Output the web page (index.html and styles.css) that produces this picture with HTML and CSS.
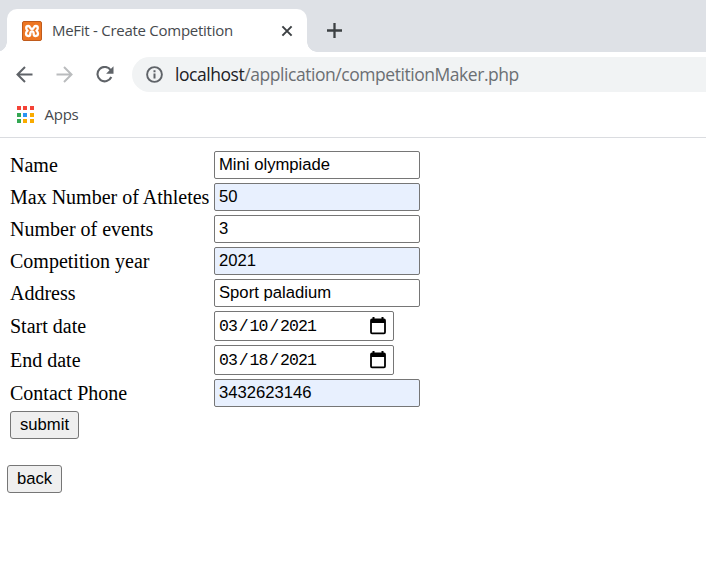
FILE: index.html
```html
<!DOCTYPE html>
<html lang="en">
<head>
<meta charset="utf-8">
<title>MeFit - Create Competition</title>
<link rel="stylesheet" href="styles.css">
</head>
<body>
<header class="browser">
  <div class="tabstrip">
    <div class="tab">
      <svg class="favicon" width="20" height="20" viewBox="0 0 20 20"><rect x=".5" y=".5" width="19" height="19" rx="1.500" fill="#ed7623" stroke="#c05b1c"/><g fill="none" stroke="#fff" stroke-width="2.300" stroke-linecap="round" stroke-linejoin="round"><path d="M8 6.300Q7.600 5 6.200 5Q4.200 5 4.200 7Q4.200 8.600 5.600 9.600Q4 10.800 4 12.600Q4 15 6.300 15Q8.300 15 8.300 12.900Q8.300 10.300 10 10.300T11.700 12.900Q11.700 15 13.700 15Q16 15 16 12.600Q16 10.800 14.400 9.600Q15.800 8.600 15.800 7Q15.800 5 13.800 5Q12.400 5 12 6.300Q11.600 8 10 8T8 6.300"/></g></svg>
      <span class="tab-title">MeFit - Create Competition</span>
      <svg class="close" width="12" height="12" viewBox="0 0 12 12"><path d="M1.400 1.400l9.200 9.200M10.600 1.400l-9.200 9.200" stroke="#3c4043" stroke-width="2"/></svg>
    </div>
    <svg class="new-tab" width="16" height="16" viewBox="0 0 16 16"><path d="M7.500 0v15M0 7.500h15" stroke="#3c4043" stroke-width="2.300"/></svg>
  </div>
  <div class="toolbar">
    <svg class="nav" width="18" height="18" viewBox="0 0 18 18"><path d="M16.500 8.500H2M9 1L1.500 8.500 9 16" fill="none" stroke="#5f6368" stroke-width="2"/></svg>
    <svg class="nav" width="18" height="18" viewBox="0 0 18 18"><path d="M.5 8.500H15M8 1l7.500 7.500L8 16" fill="none" stroke="#babcbe" stroke-width="2"/></svg>
    <svg class="nav" width="18" height="18" viewBox="0 0 18 18"><path d="M14.700 4.100A7.200 7.200 0 1 0 15.300 11" fill="none" stroke="#5f6368" stroke-width="2.100"/><path d="M17.500.3v7.400h-7.400z" fill="#5f6368"/></svg>
    <div class="address">
      <svg width="18" height="18" viewBox="0 0 18 18"><circle cx="8.500" cy="8.500" r="7.400" fill="none" stroke="#5f6368" stroke-width="1.900"/><path d="M8.500 7.500v5M8.500 4.200v2" stroke="#5f6368" stroke-width="2"/></svg>
      <span class="url"><span class="host">localhost</span>/application/competitionMaker.php</span>
    </div>
  </div>
  <div class="bookmarks">
    <div class="apps"><i class="r"></i><i class="r"></i><i class="r"></i><i class="g"></i><i class="b"></i><i class="y"></i><i class="g"></i><i class="y"></i><i class="y"></i></div>
    <span class="apps-label">Apps</span>
  </div>
</header>
<main>
  <form class="form">
    <label for="name">Name</label><input id="name" type="text" value="Mini olympiade">
    <label for="max">Max Number of Athletes</label><input id="max" class="filled" type="text" value="50">
    <label for="events">Number of events</label><input id="events" type="text" value="3">
    <label for="year">Competition year</label><input id="year" class="filled" type="text" value="2021">
    <label for="addr">Address</label><input id="addr" type="text" value="Sport paladium">
    <label>Start date</label>
    <div class="date"><span>03<b>/</b>10<b>/</b>2021</span><svg width="16" height="18" viewBox="0 0 16 18"><path d="M3.500 0v3M12.500 0v3" stroke="#000" stroke-width="2"/><rect x="1" y="2.500" width="14" height="13.800" rx="1" fill="none" stroke="#000" stroke-width="1.800"/><path d="M1 2h14v4H1z"/></svg></div>
    <label>End date</label>
    <div class="date"><span>03<b>/</b>18<b>/</b>2021</span><svg width="16" height="18" viewBox="0 0 16 18"><path d="M3.500 0v3M12.500 0v3" stroke="#000" stroke-width="2"/><rect x="1" y="2.500" width="14" height="13.800" rx="1" fill="none" stroke="#000" stroke-width="1.800"/><path d="M1 2h14v4H1z"/></svg></div>
    <label for="phone">Contact Phone</label><input id="phone" class="filled" type="text" value="3432623146">
    <button class="submit" type="button">submit</button>
  </form>
  <button class="back" type="button">back</button>
</main>
</body>
</html>
```
FILE: styles.css
```css
* { box-sizing: border-box; }
body { margin: 0; background: #fff; color: #000; overflow: hidden; }
svg { display: block; flex: none; }

.browser { height: 138px; border-bottom: 1px solid #dadce0; font-family: "Open Sans", sans-serif; }
.tabstrip { display: flex; height: 52px; padding: 9px 0 0 7px; background: #dee1e6; }
.tab { position: relative; display: flex; align-items: center; width: 300px; height: 43px; padding: 0 14px 0 15px; background: #fff; border-radius: 10px 10px 0 0; }
.tab::before, .tab::after { content: ""; position: absolute; bottom: 0; width: 10px; height: 10px; }
.tab::before { left: -10px; background: radial-gradient(circle at 0 0, transparent 9.5px, #fff 10px); }
.tab::after { right: -10px; background: radial-gradient(circle at 100% 0, transparent 9.5px, #fff 10px); }
.tab-title { margin-left: 10px; padding-bottom: 2px; font-size: 15px; letter-spacing: -0.27px; color: #45494d; white-space: nowrap; }
.close { margin-left: auto; }
.new-tab { margin: 14px 0 0 20px; }

.toolbar { display: flex; align-items: center; height: 45px; padding: 0 0 0 16px; }
.nav { margin-right: 22px; }
.address { display: flex; align-items: center; flex: 1; height: 35px; margin-left: -4px; padding-left: 14px; background: #f1f3f4; border-radius: 18px 0 0 18px; }
.url { margin-left: 11px; padding-bottom: 1px; font-size: 17.500px; letter-spacing: -0.45px; color: #6b6f73; white-space: nowrap; }
.host { color: #202124; }

.bookmarks { display: flex; align-items: center; height: 35px; padding-left: 17px; }
.apps { display: grid; grid-template-columns: repeat(3, 4px); gap: 2.300px; }
.apps i { width: 4px; height: 4px; }
.r { background: #f44336; }
.g { background: #34a853; }
.b { background: #2994f4; }
.y { background: #f9ab00; }
.apps-label { margin-left: 11px; padding-bottom: 1px; font-size: 15px; letter-spacing: -0.3px; color: #45494d; }

main { padding: 13px 7px; }
.form { display: grid; grid-template-columns: 200px 206px; column-gap: 4px; row-gap: 4px; align-items: center; margin-left: 3px; }
label { font: 20px/28px "Liberation Serif", serif; white-space: nowrap; }
input, .date { border: 1px solid #767676; border-radius: 2px; background: #fff; color: #000; }
input { width: 206px; height: 28px; margin: 0; padding: 0 4px 1px; font: 16.670px "Liberation Sans", sans-serif; outline: none; }
.filled { background: #e8f0fe; }
.date { display: flex; align-items: center; justify-content: space-between; width: 180px; height: 30px; padding: 0 7px 0 4px; font: 16.500px "Liberation Mono", monospace; letter-spacing: -0.900px; }
.date b { display: inline-block; width: 12.500px; text-align: center; font-weight: normal; }
button { height: 28px; margin: 0; padding: 0 0 1px; border: 1px solid #767676; border-radius: 3px; background: #efefef; color: #000; font: 16.670px "Liberation Sans", sans-serif; }
.submit { width: 69px; }
.back { display: block; width: 55px; margin-top: 26px; }
```
